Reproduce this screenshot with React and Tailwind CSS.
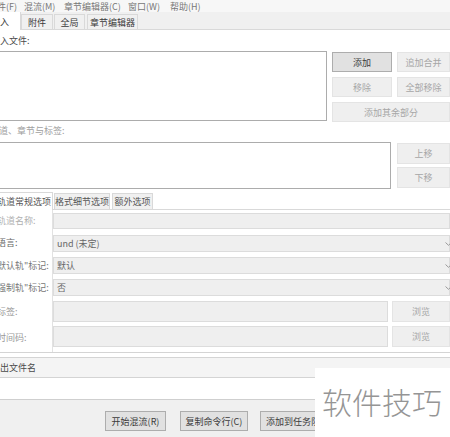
import React from 'react';

const Btn = ({ children, active, className = '' }) => (
  <div
    className={`flex items-center justify-center border whitespace-nowrap ${
      active
        ? 'bg-[#e1e1e1] border-[#adadad] text-[#3a3a3a]'
        : 'bg-[#efefef] border-[#e4e4e4] text-[#a6a6a6]'
    } ${className}`}
  >
    {children}
  </div>
);

const Chevron = () => (
  <svg width="7" height="4" viewBox="0 0 7 4" className="shrink-0 -mr-[3px]">
    <path d="M0.5 0.5 L3.5 3.3 L6.5 0.5" stroke="#9a9a9a" fill="none" strokeWidth="1" />
  </svg>
);

// one row of the track options panel
const Row = ({ label, labelColor, pt, pb, h, children }) => (
  <div className="flex">
    <div className={`w-[53px] shrink-0 border-r border-[#e2e2e2] flex items-center overflow-hidden ${labelColor}`}>
      <span className="-ml-[3px] whitespace-nowrap">{label}</span>
    </div>
    <div className={`flex-1 flex ${pt} ${pb}`}>
      <div className={`flex-1 flex ${h}`}>{children}</div>
    </div>
  </div>
);

const fieldCls = 'flex-1 flex items-center justify-between bg-[#efefef] border border-[#dcdcdc] pl-[3px] text-[#666]';

export default function App() {
  const menus = [
    { name: '文件(F)', cls: 'w-[36px] -ml-[12px]' },
    { name: '混流(M)', cls: 'w-[40px]' },
    { name: '章节编辑器(C)', cls: 'w-[64px]' },
    { name: '窗口(W)', cls: 'w-[42px]' },
    { name: '帮助(H)', cls: 'w-[40px]' },
  ];

  return (
    <div className="relative w-[450px] h-[437px] overflow-hidden bg-white font-['Noto_Sans_CJK_SC',sans-serif] text-[9px] leading-none text-[#4a4a4a] flex flex-col">
      {/* Menu bar */}
      <div className="h-[12px] shrink-0 bg-[#f7f7f7] flex items-center text-[#777]">
        {menus.map((m) => (
          <span key={m.name} className={`shrink-0 whitespace-nowrap ${m.cls}`}>
            {m.name}
          </span>
        ))}
      </div>

      {/* Main tabs */}
      <div className="h-[18px] shrink-0 bg-[#f0f0f0] border-b border-[#d9d9d9] flex items-end text-[#3a3a3a]">
        <div className="relative z-10 w-[21px] h-[18px] -mb-px bg-white border-r border-[#d9d9d9] overflow-hidden flex items-center">
          <span className="-ml-[9px] whitespace-nowrap">输入</span>
        </div>
        <div className="w-[32px] h-[15px] border border-b-0 border-[#d9d9d9] flex items-center justify-center">附件</div>
        <div className="ml-[1px] w-[31px] h-[15px] border border-b-0 border-[#d9d9d9] flex items-center justify-center">全局</div>
        <div className="ml-[2px] w-[51px] h-[15px] border border-b-0 border-[#d9d9d9] flex items-center justify-center">章节编辑器</div>
      </div>

      {/* Input files */}
      <div className="h-[21px] shrink-0 flex items-center">
        <span className="-ml-[9px] whitespace-nowrap">输入文件:</span>
      </div>
      <div className="h-[71px] shrink-0 flex">
        <div className="-ml-[4px] w-[331px] h-[70px] shrink-0 border border-[#acacac] bg-white"></div>
        <div className="ml-[5px] w-[118px] grid grid-cols-[60px_53px] gap-[5px] pt-[1px] content-start">
          <Btn active className="h-[20px]">添加</Btn>
          <Btn className="h-[20px]">追加合并</Btn>
          <Btn className="h-[20px]">移除</Btn>
          <Btn className="h-[20px]">全部移除</Btn>
          <Btn className="h-[20px] col-span-2">添加其余部分</Btn>
        </div>
      </div>

      {/* Tracks, chapters and tags */}
      <div className="h-[20px] shrink-0 flex items-center pb-[3px] text-[#a0a0a0]">
        <span className="-ml-[10px] whitespace-nowrap">轨道、章节与标签:</span>
      </div>
      <div className="h-[50px] shrink-0 flex">
        <div className="-ml-[4px] w-[395px] h-[47px] shrink-0 border border-[#acacac] bg-white"></div>
        <div className="ml-[6px] w-[53px] flex flex-col gap-[3px] pt-[1px]">
          <Btn className="h-[21px]">上移</Btn>
          <Btn className="h-[21px]">下移</Btn>
        </div>
      </div>

      {/* Sub tabs */}
      <div className="h-[18px] shrink-0 border-b border-[#d9d9d9] flex items-end text-[#555]">
        <div className="relative z-10 w-[53px] h-[18px] -mb-px bg-white border-t border-r border-[#d9d9d9] overflow-hidden flex items-center">
          <span className="-ml-[3px] whitespace-nowrap">轨道常规选项</span>
        </div>
        <div className="ml-[1px] w-[56px] h-[16px] border border-b-0 border-[#d9d9d9] bg-[#f0f0f0] flex items-center justify-center">格式细节选项</div>
        <div className="ml-[2px] w-[41px] h-[16px] border border-b-0 border-[#d9d9d9] bg-[#f0f0f0] flex items-center justify-center">额外选项</div>
      </div>

      {/* Track options panel */}
      <div className="shrink-0 border-b border-[#d4d4d4]">
        <Row label="轨道名称:" labelColor="text-[#b0b0b0]" pt="pt-[3px]" pb="pb-[2px]" h="h-[16px]">
          <div className={fieldCls}></div>
        </Row>
        <Row label="语言:" labelColor="text-[#666]" pt="pt-[4px]" pb="pb-[2px]" h="h-[17px]">
          <div className={fieldCls}>
            <span>und (未定)</span>
            <Chevron />
          </div>
        </Row>
        <Row label={'默认轨"标记:'} labelColor="text-[#777]" pt="pt-[3px]" pb="pb-[2px]" h="h-[17px]">
          <div className={fieldCls}>
            <span>默认</span>
            <Chevron />
          </div>
        </Row>
        <Row label={'强制轨"标记:'} labelColor="text-[#777]" pt="pt-[3px]" pb="pb-[2px]" h="h-[17px]">
          <div className={fieldCls}>
            <span>否</span>
            <Chevron />
          </div>
        </Row>
        <Row label="标签:" labelColor="text-[#999]" pt="pt-[3px]" pb="pb-[2px]" h="h-[21px]">
          <div className={fieldCls}></div>
          <Btn className="ml-[4px] w-[58px]">浏览</Btn>
        </Row>
        <Row label="时间码:" labelColor="text-[#999]" pt="pt-[2px]" pb="pb-[3px]" h="h-[21px]">
          <div className={fieldCls}></div>
          <Btn className="ml-[4px] w-[58px]">浏览</Btn>
        </Row>
        <div className="flex h-[2px]">
          <div className="w-[53px] border-r border-[#e2e2e2]"></div>
        </div>
      </div>

      {/* Output file name */}
      <div className="h-[4px] shrink-0"></div>
      <div className="h-[21px] shrink-0 border-t border-b border-[#d4d4d4] bg-[#f4f4f4] flex items-center text-[#4a4a4a]">
        <span className="-ml-[9px] whitespace-nowrap">输出文件名</span>
      </div>
      <div className="h-[22px] shrink-0 border-b border-[#cfcfcf] bg-white"></div>

      {/* Bottom action bar */}
      <div className="flex-1 bg-[#f0f0f0] flex items-start pt-[11px]">
        <Btn active className="ml-[105px] w-[61px] h-[20px]">开始混流(R)</Btn>
        <Btn active className="ml-[14px] w-[68px] h-[20px]">复制命令行(C)</Btn>
        <Btn active className="ml-[12px] w-[75px] h-[20px] justify-start pl-[5px]">添加到任务队列</Btn>
      </div>

      {/* Watermark */}
      <div className="absolute left-[315px] top-[368px] w-[135px] h-[69px] bg-white flex items-center pl-[7px] pb-[3px]">
        <span className="text-[30px] font-light text-[#959595] whitespace-nowrap leading-none">软件技巧</span>
      </div>
    </div>
  );
}
